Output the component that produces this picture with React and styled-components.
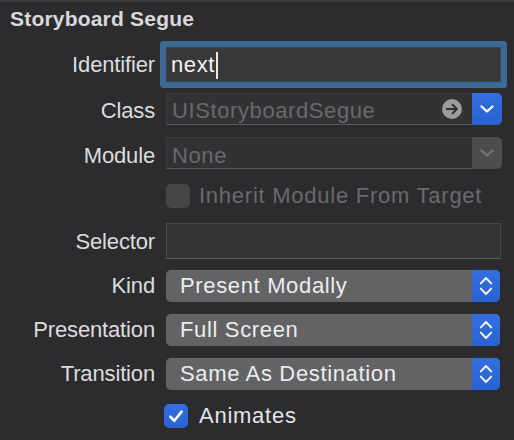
import React from 'react';
import styled, { createGlobalStyle } from 'styled-components';

const Global = createGlobalStyle`
  html, body { margin: 0; padding: 0; background: #2c2c2f; }
  body { font-family: "Liberation Sans", Arial, sans-serif; -webkit-font-smoothing: antialiased; }
`;

const Panel = styled.div`
  width: 514px;
  height: 440px;
  box-sizing: border-box;
  border-top: 2px solid #3a3a3d;
  background: #2c2c2f;
  display: flex;
  flex-direction: column;
  overflow: hidden;
`;

const Title = styled.h2`
  margin: 5px 0 0 10px;
  font-size: 21px;
  font-weight: 700;
  line-height: 24px;
  letter-spacing: 0.2px;
  color: #d9d9db;
`;

const Row = styled.div`
  display: flex;
  align-items: flex-start;
  height: ${p => p.$h}px;
  margin-top: ${p => p.$mt}px;
`;

const Label = styled.div`
  width: 155px;
  flex: none;
  margin-right: 11px;
  text-align: right;
  font-size: 22px;
  line-height: 24px;
  letter-spacing: -0.15px;
  color: #dcdcde;
  padding-top: ${p => p.$pt || 0}px;
  white-space: nowrap;
`;

const FocusField = styled.div`
  width: 335px;
  height: 35px;
  box-sizing: border-box;
  display: flex;
  align-items: flex-start;
  padding-left: 4px;
  background: #38383b;
  border: 1px solid #2d4660;
  border-radius: 1px;
  box-shadow: 0 0 0 6px #3e6992;
`;

const FieldText = styled.span`
  font-size: 22px;
  line-height: 24px;
  letter-spacing: 0.6px;
  padding-top: ${p => p.$pt}px;
  color: ${p => (p.$dim ? '#69696c' : '#f2f2f4')};
  white-space: nowrap;
`;

const Caret = styled.span`
  width: 2px;
  height: 27px;
  margin-top: 4px;
  margin-left: 1px;
  background: #e8e8ea;
`;

const Combo = styled.div`
  display: flex;
  width: 336px;
  height: 32px;
`;

const ComboText = styled.div`
  flex: 1;
  display: flex;
  align-items: flex-start;
  box-sizing: border-box;
  padding-left: 5px;
  padding-right: 10px;
  background: #323235;
  border: 1px solid #3c3c3f;
  border-bottom-color: #59595c;
  border-right: none;
`;

const Spacer = styled.span`
  flex: 1;
`;

const GoIcon = styled.svg`
  flex: none;
  margin-top: 5px;
`;

const ComboButton = styled.div`
  width: 30px;
  flex: none;
  display: flex;
  align-items: center;
  justify-content: center;
  border-radius: 0 5px 5px 0;
  background: ${p => (p.$active ? 'linear-gradient(#3370e0, #2a61d0)' : '#4d4d50')};
`;

const TextBox = styled.div`
  width: 335px;
  height: 36px;
  box-sizing: border-box;
  background: #333336;
  border: 1px solid #48484b;
  border-bottom-color: #5a5a5d;
`;

const Popup = styled.div`
  width: 334px;
  height: 32px;
  display: flex;
  border-radius: 5px;
  overflow: hidden;
  background: #636366;
  box-shadow: inset 0 1px 0 rgba(255, 255, 255, 0.06);
`;

const PopupText = styled.div`
  flex: 1;
  padding: 4px 0 0 14px;
  font-size: 22px;
  line-height: 24px;
  letter-spacing: 0.65px;
  color: #ececee;
  white-space: nowrap;
`;

const Stepper = styled.div`
  width: 28px;
  flex: none;
  display: flex;
  align-items: center;
  justify-content: center;
  background: linear-gradient(#3370e0, #2a61d0);
`;

const Check = styled.label`
  display: flex;
  align-items: flex-start;
  margin-left: ${p => p.$ml || 0}px;
`;

const Box = styled.span`
  width: 24px;
  height: 24px;
  flex: none;
  border-radius: 5px;
  display: flex;
  align-items: center;
  justify-content: center;
  background: ${p => (p.$on ? 'linear-gradient(#3370e0, #2a61d0)' : '#464649')};
`;

const CheckText = styled.span`
  margin-left: ${p => p.$gap}px;
  font-size: 22px;
  line-height: 24px;
  letter-spacing: 0.75px;
  color: ${p => (p.$dim ? '#6a6a6d' : '#e4e4e6')};
  white-space: nowrap;
`;

const ChevronDown = ({ color = '#ffffff' }) => (
  <svg width="14" height="8" viewBox="0 0 14 8">
    <path d="M1.5 1.5 L7 6.5 L12.5 1.5" fill="none" stroke={color} strokeWidth="2.2" strokeLinecap="round" strokeLinejoin="round" />
  </svg>
);

const UpDown = () => (
  <svg width="14" height="20" viewBox="0 0 14 20">
    <path d="M1.8 7.4 L7 2 L12.2 7.4" fill="none" stroke="#eef3ff" strokeWidth="2" strokeLinecap="round" strokeLinejoin="round" />
    <path d="M1.8 12.6 L7 18 L12.2 12.6" fill="none" stroke="#eef3ff" strokeWidth="2" strokeLinecap="round" strokeLinejoin="round" />
  </svg>
);

const PopupRow = ({ label, value, mt }) => (
  <Row $h={32} $mt={mt}>
    <Label $pt={4}>{label}</Label>
    <Popup>
      <PopupText>{value}</PopupText>
      <Stepper>
        <UpDown />
      </Stepper>
    </Popup>
  </Row>
);

export default function App() {
  return (
    <>
      <Global />
      <Panel>
        <Title>Storyboard Segue</Title>

        <Row $h={35} $mt={16}>
          <Label $pt={6}>Identifier</Label>
          <FocusField>
            <FieldText $pt={5}>next</FieldText>
            <Caret />
          </FocusField>
        </Row>

        <Row $h={32} $mt={11}>
          <Label $pt={6}>Class</Label>
          <Combo>
            <ComboText>
              <FieldText $pt={5} $dim>UIStoryboardSegue</FieldText>
              <Spacer />
              <GoIcon width="20" height="20" viewBox="0 0 20 20">
                <circle cx="10" cy="10" r="10" fill="#9c9c9f" />
                <path d="M4.8 10 H14.6 M10.6 5.8 L14.8 10 L10.6 14.2" fill="none" stroke="#2e2e30" strokeWidth="2" strokeLinecap="round" strokeLinejoin="round" />
              </GoIcon>
            </ComboText>
            <ComboButton $active>
              <ChevronDown />
            </ComboButton>
          </Combo>
        </Row>

        <Row $h={32} $mt={12}>
          <Label $pt={7}>Module</Label>
          <Combo>
            <ComboText>
              <FieldText $pt={6} $dim>None</FieldText>
            </ComboText>
            <ComboButton>
              <ChevronDown color="#77777a" />
            </ComboButton>
          </Combo>
        </Row>

        <Row $h={24} $mt={15}>
          <Label />
          <Check>
            <Box />
            <CheckText $gap={9} $dim>Inherit Module From Target</CheckText>
          </Check>
        </Row>

        <Row $h={36} $mt={15}>
          <Label $pt={7}>Selector</Label>
          <TextBox />
        </Row>

        <PopupRow label="Kind" value="Present Modally" mt={11} />
        <PopupRow label="Presentation" value="Full Screen" mt={12} />
        <PopupRow label="Transition" value="Same As Destination" mt={12} />

        <Row $h={24} $mt={14}>
          <Label />
          <Check $ml={-2}>
            <Box $on>
              <svg width="24" height="24" viewBox="0 0 24 24">
                <path d="M6.3 12.6 L10.3 16.8 L17.6 7.6" fill="none" stroke="#ffffff" strokeWidth="2.6" strokeLinecap="round" strokeLinejoin="round" />
              </svg>
            </Box>
            <CheckText $gap={11}>Animates</CheckText>
          </Check>
        </Row>
      </Panel>
    </>
  );
}
